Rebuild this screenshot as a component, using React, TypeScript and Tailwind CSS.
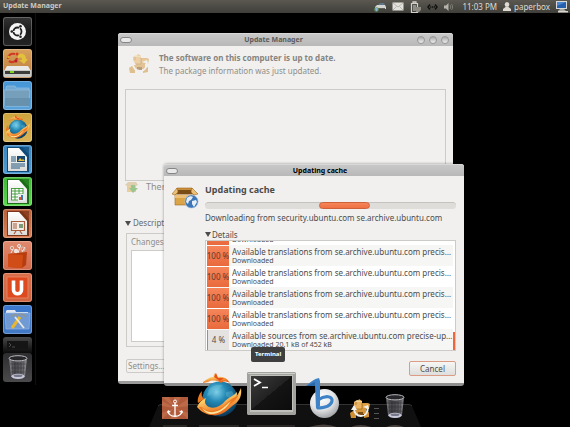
import type { ReactNode } from 'react';
import { clsx } from 'clsx';

const downloads = [
  { id: 1, progress: 100, title: 'Available translations from se.archive.ubuntu.com precise/main', status: 'Downloaded' },
  { id: 2, progress: 100, title: 'Available translations from se.archive.ubuntu.com precise/multiverse', status: 'Downloaded' },
  { id: 3, progress: 100, title: 'Available translations from se.archive.ubuntu.com precise/restricted', status: 'Downloaded' },
  { id: 4, progress: 100, title: 'Available translations from se.archive.ubuntu.com precise/universe', status: 'Downloaded' },
  { id: 5, progress: 100, title: 'Available translations from se.archive.ubuntu.com precise/extras', status: 'Downloaded' },
  { id: 6, progress: 4, title: 'Available sources from se.archive.ubuntu.com precise-updates/main', status: 'Downloaded 20.1 kB of 452 kB' },
];

/* Gradients shared by all icons */
function Gradients() {
  return (
    <svg className="absolute h-0 w-0" aria-hidden="true">
      <defs>
        <radialGradient id="globe" cx="0.4" cy="0.3" r="0.8">
          <stop offset="0" stopColor="#7fd0e8" />
          <stop offset="0.35" stopColor="#2489b5" />
          <stop offset="1" stopColor="#052a4a" />
        </radialGradient>
        <linearGradient id="flame" x1="0" y1="0" x2="0.4" y2="1">
          <stop offset="0" stopColor="#e2511a" />
          <stop offset="0.45" stopColor="#ffd069" />
          <stop offset="1" stopColor="#e8671b" />
        </linearGradient>
        <linearGradient id="paper" x1="0" y1="0" x2="0" y2="1">
          <stop offset="0" stopColor="#ffffff" />
          <stop offset="1" stopColor="#dcdcda" />
        </linearGradient>
        <linearGradient id="screen" x1="0" y1="0" x2="1" y2="1">
          <stop offset="0" stopColor="#3b3b3b" />
          <stop offset="0.5" stopColor="#222222" />
          <stop offset="0.5" stopColor="#141414" />
          <stop offset="1" stopColor="#0c0c0c" />
        </linearGradient>
        <linearGradient id="glass" x1="0" y1="0" x2="1" y2="0">
          <stop offset="0" stopColor="#a3a3a8" />
          <stop offset="0.3" stopColor="#515156" />
          <stop offset="0.7" stopColor="#6b6b70" />
          <stop offset="1" stopColor="#b0b0b5" />
        </linearGradient>
        <radialGradient id="ball" cx="0.4" cy="0.3" r="0.7">
          <stop offset="0" stopColor="#ffffff" />
          <stop offset="0.6" stopColor="#e3e4e6" />
          <stop offset="1" stopColor="#a5a7ab" />
        </radialGradient>
      </defs>
    </svg>
  );
}

function FirefoxIcon({ className }: { className: string }) {
  return (
    <svg viewBox="0 0 46 46" className={className} aria-hidden="true">
      <circle cx="24" cy="26" r="17.5" fill="url(#globe)" />
      <path d="M13 16c4-4 9-5 14-4l-4 4-5 1-3 5-4 1zM30 19l6-1 3 5-4 3-5-3z" fill="#7fd0e4" opacity="0.3" />
      <path d="M7 9c4-3 7-5 10-5l2-4 3 4c5-1 9 1 12 6-4-2-7-2-9 0-4-3-9-3-13-1l-5 1z" fill="url(#flame)" />
      <path d="M18 4l2-4 2 5 6 0-4 3z" fill="#e6531a" />
      <path d="M1 34c2-4 4-7 9-9-2 4-1 7 3 9 6 2 12-1 16-6 4-4 9-5 12-9 0 2 0 3-1 4 2-1 3-4 5-8 1 7-1 12-6 16-6 4-10 10-18 11-8 1-15-2-20-8z" fill="url(#flame)" />
      <path d="M3 34c3-1 5 3 10 4 9 1 14-4 19-9 4-4 8-5 11-8-3 7-8 9-12 13-6 6-14 8-20 6-4-1-6-3-8-6z" fill="#ef7a20" />
      <path d="M6 35c6 6 15 5 21 0l8-7c-5 8-13 14-21 13-4-1-6-3-8-6z" fill="#ffe7a0" />
      <path d="M2 30c-1-4 1-9 4-12-1 4 0 6 2 8z" fill="#e9791f" />
    </svg>
  );
}

function TrashIcon({ className }: { className: string }) {
  return (
    <svg viewBox="0 0 20 25" className={className} aria-hidden="true">
      <path d="M1 3l2 18c0 4 14 4 14 0l2-18z" fill="url(#glass)" opacity="0.75" />
      <path d="M4 6l1 15M7 7l0 16M10 7v16M13 7v16M16 6l-1 15M2 9h16M3 13h14M3 17h14" stroke="#2c2c30" strokeWidth="0.6" fill="none" opacity="0.7" />
      <ellipse cx="10" cy="3.3" rx="9" ry="2.6" fill="#27272a" stroke="#b9b9be" strokeWidth="1" />
      <ellipse cx="10" cy="21.3" rx="6.5" ry="2.6" fill="#c9c9dc" />
      <ellipse cx="10" cy="20.8" rx="4.5" ry="1.3" fill="#77778a" />
    </svg>
  );
}

function UpdateIcon({ className }: { className: string }) {
  return (
    <svg viewBox="0 0 20 20" className={className} aria-hidden="true">
      <path d="M4 3l4-1 1-2 3 2v2h6l2 1-1 5h-3v5H5V9H4z" fill="#d6983a" />
      <path d="M4 3h8v7H4z" fill="#eab260" />
      <path d="M4 3l3-2 5 1v1z" fill="#f3cf90" />
      <path d="M13 5h6v4h-6z" fill="#dfa34a" />
      <path d="M0 14l3-2 3 1v6H1zM14 14l5-1v5l-5 1z" fill="#cf8f32" />
      <path d="M4 10h8M12 4v6M6 3v3" stroke="#9c6720" strokeWidth="0.700" />
      <path d="M8 13h5v4H8z" fill="#7c4b14" />
      <path d="M17 7c2 5-1 10-6 10-4 0-7-3-7-7" fill="none" stroke="#f1f1ee" strokeWidth="1.800" />
      <path d="M1 11l3-5 3 5zM13 8l5-2 1 4z" fill="#f1f1ee" />
    </svg>
  );
}

function BoxIcon() {
  return (
    <svg viewBox="0 0 27 22" className="h-[22px] w-[27px] shrink-0" aria-hidden="true">
      <path d="M5 1h15l2 6H3z" fill="#c98f3a" stroke="#9e6922" strokeWidth="0.6" />
      <path d="M6 3h13l1 4H5z" fill="#7a4d16" />
      <path d="M5 1L0 7l3 1 3-3zM20 1l6 6-4 1-3-3z" fill="#edc077" stroke="#9e6922" strokeWidth="0.6" />
      <path d="M3 8h19v10H3z" fill="#dba447" stroke="#9e6922" strokeWidth="0.6" />
      <path d="M3 8h19v3H3z" fill="#edc077" />
      <circle cx="19.500" cy="14.500" r="6.600" fill="#3d76b8" stroke="#b7cbe0" strokeWidth="0.6" />
      <path d="M15 11c2-2 5-2 6-1l-2 3-2 1-1 3-2-2zM20 14l4-1 1 2-3 5-2-3z" fill="#e6eff8" />
    </svg>
  );
}

function AnchorIcon({ className }: { className: string }) {
  return (
    <svg viewBox="0 0 26 22" className={className} aria-hidden="true">
      <path d="M0 0h26v22H0z" fill="#b05a3c" />
      <path d="M13 11L0 0h7zM13 11L12 0h7zM13 11L26 2v7zM13 11l13 5v6zM13 11l2 11H8zM13 11L0 22v-6zM13 11L0 9V4z" fill="#bd6a48" />
      <path d="M13 6v13M10 8.500h6M6 14c1 7 13 7 14 0" fill="none" stroke="#ffffff" strokeWidth="1.300" />
      <circle cx="13" cy="4.500" r="1.500" fill="none" stroke="#ffffff" />
      <path d="M5 16l1-3 3 2zM21 16l-1-3-3 2z" fill="#ffffff" />
    </svg>
  );
}

function TerminalIcon() {
  return (
    <svg viewBox="0 0 49 43" className="h-[43px] w-[49px]" aria-hidden="true">
      <path d="M0 1l1-1h47l1 1v41l-1 1H1l-1-1z" fill="#a2a29f" />
      <path d="M1 1h47v1H1z" fill="#cfcfcc" />
      <path d="M3 3h43v37H3z" fill="#c0c0bd" />
      <path d="M4 4h41v34H4z" fill="url(#screen)" />
      <path d="M7 7l6 3.500-6 3.500" fill="none" stroke="#ffffff" strokeWidth="1.800" />
      <path d="M15 15.500h6" stroke="#ffffff" strokeWidth="1.500" />
    </svg>
  );
}

function BluefishIcon() {
  return (
    <svg viewBox="0 0 34 41" className="h-[41px] w-[34px]" aria-hidden="true">
      <circle cx="18.500" cy="25.500" r="14.500" fill="url(#ball)" />
      <path d="M0 8C4 4 8 1 13 0l1 3v25l-4 3-1-23z" fill="#3f83c6" />
      <path d="M0 8l9-4v4z" fill="#2d68a6" />
      <path d="M12 22c7-5 15-4 14 1-1 5-8 7-15 7" fill="none" stroke="#3f83c6" strokeWidth="3.200" />
    </svg>
  );
}

function DocumentIcon({ color, children }: { color: string; children: ReactNode }) {
  return (
    <svg viewBox="0 0 29 29" className="h-[29px] w-[29px]" aria-hidden="true">
      <path d="M4 2h15l7 8v17H4z" fill={color} />
      <path d="M5 3h11l8 9v14H5z" fill="url(#paper)" />
      <path d="M16 2h10v10z" fill={color} opacity="0.75" />
      {children}
    </svg>
  );
}

function Expander() {
  return (
    <svg viewBox="0 0 6 5" className="h-[5px] w-[6px]" aria-hidden="true">
      <path d="M0 0h6L3 5z" fill="#4c4c4c" />
    </svg>
  );
}

const launcherItems = [
  {
    name: 'Dash home',
    tile: 'bg-linear-to-b from-[#343434] via-[#1b1b1b] to-[#242424]',
    icon: (
      <svg viewBox="0 0 29 29" className="h-[29px] w-[29px]" aria-hidden="true">
        <circle cx="14.500" cy="14.500" r="8.500" fill="#f4f4f4" />
        <circle cx="14.500" cy="14.500" r="4" fill="none" stroke="#222222" strokeWidth="1.800" />
        <path d="M14.500 14.500h-6M14.500 14.500l3-5M14.500 14.500l3 5" stroke="#f4f4f4" strokeWidth="1" />
        <circle cx="8.800" cy="14.500" r="1.300" fill="#222222" />
        <circle cx="17.500" cy="9.300" r="1.300" fill="#222222" />
        <circle cx="17.500" cy="19.700" r="1.300" fill="#222222" />
      </svg>
    ),
  },
  {
    name: 'Install Ubuntu',
    tile: 'bg-linear-to-b from-[#d9a15c] to-[#b97a3c]',
    icon: (
      <svg viewBox="0 0 29 29" className="h-[29px] w-[29px]" aria-hidden="true">
        <path d="M4 17h21l3 5H1z" fill="#e9e9e7" />
        <path d="M1 21h27v7H1z" fill="#c9c9c6" />
        <path d="M2 22h25v3H2z" fill="#3c3c3a" />
        <path d="M7 22h4v2H7z" fill="#7ed321" />
        <path d="M15 6c5-3 8 0 8 4h2l-4 5-5-4h3c0-3-1-3-4-2z" fill="#e3c13a" />
        <path d="M5 10c0-4 3-6 7-5M6 12c3 2 7 1 8-3" fill="none" stroke="#cf3a25" strokeWidth="2.200" />
        <circle cx="5.500" cy="8" r="1.300" fill="#eaa52b" />
        <circle cx="14" cy="5" r="1.500" fill="#d93a1e" />
        <circle cx="13" cy="12" r="1.500" fill="#b71f2b" />
      </svg>
    ),
  },
  {
    name: 'Home Folder',
    tile: 'bg-linear-to-b from-[#4595d6] to-[#5aa2d8]',
    icon: (
      <svg viewBox="0 0 29 29" className="h-[29px] w-[29px]" aria-hidden="true">
        <path d="M3 6l1-1h8l1 2h13v18H3z" fill="#6fa9d4" stroke="#9ac8e8" strokeWidth="0.6" />
        <path d="M1 9h26l-1 16H2z" fill="#769fbb" stroke="#a3c8e0" strokeWidth="0.6" />
        <path d="M2 17h25v8H2z" fill="#6891ad" />
      </svg>
    ),
  },
  {
    name: 'Firefox Web Browser',
    tile: 'bg-linear-to-b from-[#cfa43c] to-[#d9b357]',
    icon: <FirefoxIcon className="h-[25px] w-[25px]" />,
  },
  {
    name: 'LibreOffice Writer',
    tile: 'bg-linear-to-b from-[#3d86bf] to-[#4f9bd2]',
    icon: (
      <DocumentIcon color="#0f4a78">
        <path d="M8 12h5M8 14h5M8 16h5M8 19h14M8 21h14M8 23h9" stroke="#22567f" strokeWidth="1" />
        <path d="M14 11h8v6h-8z" fill="#17476e" />
        <path d="M15 16l2-3 2 2 1-1 2 2z" fill="#e9b93c" />
      </DocumentIcon>
    ),
  },
  {
    name: 'LibreOffice Calc',
    tile: 'bg-linear-to-b from-[#41b837] to-[#5cd850]',
    icon: (
      <DocumentIcon color="#1c6d16">
        <path d="M8 11h12v12H8z" fill="#ffffff" />
        <path d="M8 11.500h12M8 14h12M8 17h12M8 20h12M8 23h8M8.500 11v12M12 11v12M16 11v12M20 11v7" stroke="#37962e" strokeWidth="0.900" />
        <path d="M15 17h7v7h-7z" fill="#e8edf0" />
        <path d="M16 20h2v3h-2z" fill="#d65a28" />
        <path d="M18 18h2v5h-2z" fill="#3c7ab5" />
      </DocumentIcon>
    ),
  },
  {
    name: 'LibreOffice Impress',
    tile: 'bg-linear-to-b from-[#b8603a] to-[#d98157]',
    icon: (
      <DocumentIcon color="#7b351a">
        <path d="M8.500 12.500h13v9h-13z" fill="#f4ece7" stroke="#a65c38" strokeWidth="1.200" />
        <path d="M10 15h4M10 17h4M10 19h4M13 22l-2 3M17 22l2 3" stroke="#a65c38" strokeWidth="1.200" />
        <path d="M16 15h4v4h-4z" fill="#7d9b78" />
      </DocumentIcon>
    ),
  },
  {
    name: 'Ubuntu Software Center',
    tile: 'bg-linear-to-b from-[#e08a6f] to-[#d2694a]',
    icon: (
      <svg viewBox="0 0 29 29" className="h-[29px] w-[29px]" aria-hidden="true">
        <path d="M5 13l19-2-1 13-4 3-14-1z" fill="#b83d0e" />
        <path d="M5 13l15 1-1 13-14-1z" fill="#d04d17" />
        <circle cx="9" cy="7" r="1.700" fill="none" stroke="#e2d6cc" />
        <circle cx="16" cy="5" r="1.500" fill="none" stroke="#e6eeee" />
        <circle cx="13" cy="10" r="2.200" fill="#eee4dc" />
        <circle cx="20" cy="8" r="2" fill="none" stroke="#d9c3b6" />
        <path d="M8 12l2-4M15 12l2-6M19 11l3-5" stroke="#f3e7e0" strokeWidth="1" />
      </svg>
    ),
  },
  {
    name: 'Ubuntu One',
    tile: 'bg-linear-to-b from-[#d9704c] to-[#cf6440]',
    icon: (
      <svg viewBox="0 0 29 29" className="h-[29px] w-[29px]" aria-hidden="true">
        <path d="M4 4h21v21H4z" fill="#dd4a20" stroke="#ec8c68" strokeWidth="0.800" />
        <path d="M10.500 7.500V17c0 5 8 5 8 0V7.500" fill="none" stroke="#ffffff" strokeWidth="3.600" />
      </svg>
    ),
  },
  {
    name: 'System Settings',
    tile: 'bg-linear-to-b from-[#3a78cf] to-[#4379c4]',
    icon: (
      <svg viewBox="0 0 29 29" className="h-[29px] w-[29px]" aria-hidden="true">
        <path d="M3 6l1-1h8l1 2h12v4H3z" fill="#dfe8f3" />
        <path d="M2 8h25l-1 16H3z" fill="#6f9ad4" stroke="#9dbce6" strokeWidth="0.600" />
        <path d="M17 12L9 23" stroke="#e8b62c" strokeWidth="3" />
        <path d="M12 12l9 11" stroke="#e6e6e4" strokeWidth="1.800" />
        <path d="M8 12c2-3 5-3 6-1M16 10c3-2 5 0 7 2" fill="none" stroke="#8e959c" strokeWidth="2" />
      </svg>
    ),
  },
];

/* Small glyphs of the top panel */
function PrinterIcon() {
  return (
    <svg viewBox="0 0 12 10" className="h-[10px] w-3" aria-hidden="true">
      <path d="M4 3l2-2h4l1 2" fill="#5d7487" />
      <path d="M1 5l2-2h8l1 2v2H1z" fill="#d3d3cf" />
      <path d="M3 6h8v1H3z" fill="#5f5e58" />
      <circle cx="2.500" cy="7.500" r="2.300" fill="#5f9a5a" />
      <path d="M1 7h3M2.500 6v3" stroke="#8fb4dd" />
    </svg>
  );
}

function MailIcon() {
  return (
    <svg viewBox="0 0 12 9" className="h-[9px] w-3" aria-hidden="true">
      <path d="M0.500 0.500h11v8H0.500z" fill="#e3e1db" />
      <path d="M1 1l5 4 5-4M1 8l3.500-3.500M11 8L7.500 4.500" fill="none" stroke="#a5a39a" strokeWidth="0.700" />
    </svg>
  );
}

function BatteryIcon() {
  return (
    <svg viewBox="0 0 11 12" className="h-3 w-[11px]" aria-hidden="true">
      <path d="M1.500 2.500h6v9h-6zM3 0.800h3v1.500H3z" fill="none" stroke="#d2d0c8" strokeWidth="1.200" />
      <path d="M3 5h3M3 7h3M3 9h3" stroke="#d2d0c8" />
      <path d="M6 6h5v3l-2 2H6z" fill="#8c8a82" />
    </svg>
  );
}

function NetworkIcon() {
  return (
    <svg viewBox="0 0 11 6" className="h-[6px] w-[11px]" aria-hidden="true">
      <path d="M3 0.500L1 3l2 2.500M8 0.500L10 3 8 5.500" fill="none" stroke="#11110f" strokeWidth="1.500" />
      <path d="M3.200 3h1.200M5 3h1.200M6.800 3H8" stroke="#11110f" strokeWidth="1.300" />
    </svg>
  );
}

function SoundIcon() {
  return (
    <svg viewBox="0 0 9 8" className="h-2 w-[9px]" aria-hidden="true">
      <path d="M0 2.500h2L4.500 0v8L2 5.500H0z" fill="#b5b3ab" />
      <path d="M6 2c1 1 1 3 0 4M7.500 1c1.500 2 1.500 4 0 6" fill="none" stroke="#8d8b83" strokeWidth="0.800" />
    </svg>
  );
}

function UserIcon() {
  return (
    <svg viewBox="0 0 8 9" className="h-[9px] w-2" aria-hidden="true">
      <ellipse cx="4" cy="2.500" rx="2.300" ry="2.500" fill="#dfdbd2" />
      <path d="M0 9V7l2.500-2h3L8 7v2z" fill="#dfdbd2" />
    </svg>
  );
}

function MonitorIcon() {
  return (
    <svg viewBox="0 0 12 12" className="h-3 w-3" aria-hidden="true">
      <path d="M0 0h11v8H0z" fill="#d6d8da" />
      <path d="M1 1h9v6H1z" fill="#245fae" />
      <path d="M1 1h9L1 5z" fill="#4c86cf" />
      <path d="M4 8h4l2 2H2z" fill="#aaa9a3" />
      <path d="M2 10h10v1.500H2z" fill="#d6d4cd" />
    </svg>
  );
}

function Panel() {
  return (
    <header className="flex h-[13px] shrink-0 items-center justify-between bg-linear-to-b from-[#5a5850] to-[#403f3a] pr-[2px] pl-[3px] text-[#dfdbd2]">
      <span className="text-[7px] font-bold text-[#cdc9c0]">Update Manager</span>
      <div className="flex items-center gap-[6px]">
        <PrinterIcon />
        <MailIcon />
        <BatteryIcon />
        <NetworkIcon />
        <SoundIcon />
        <time className="ml-[3px] text-[8px]">11:03 PM</time>
        <button type="button" className="flex items-center gap-[3px] text-[8px]">
          <UserIcon />
          paperbox
        </button>
        <MonitorIcon />
      </div>
    </header>
  );
}

function Launcher() {
  return (
    <nav className="w-9 shrink-0 self-start border-r border-[#101012] pt-1 pb-[3px] pl-[3px]">
      <div className="flex flex-col gap-[3px]">
        {launcherItems.map((item) => (
          <button
            key={item.name}
            type="button"
            aria-label={item.name}
            className={clsx('flex h-[29px] w-[29px] items-center justify-center rounded-[3px] inset-ring inset-ring-white/25', item.tile)}
          >
            {item.icon}
          </button>
        ))}
        <div>
          <button type="button" aria-label="Terminal" className="block h-4 w-[29px] rounded-t-[3px] bg-linear-to-b from-[#4a4a4a] to-[#0c0c0c] p-1">
            <svg viewBox="0 0 21 8" className="h-2 w-[21px]" aria-hidden="true">
              <path d="M0 0h21v8H0z" fill="#151515" />
              <path d="M2 2l2 2-2 2M5 6h3" fill="none" stroke="#5c5c5c" strokeWidth="0.800" />
            </svg>
          </button>
          <button type="button" aria-label="Trash" className="flex h-[29px] w-[29px] items-center justify-center rounded-[3px] bg-linear-to-b from-[#2d2d2f] to-[#4a4a4c]">
            <TrashIcon className="h-[25px] w-5" />
          </button>
        </div>
      </div>
    </nav>
  );
}

function TitleBar({ title, active, controls }: { title: string; active?: boolean; controls?: boolean }) {
  return (
    <div
      className={clsx(
        'grid items-center rounded-t-[3px] border-t border-[#d8d8d8] bg-linear-to-b from-[#c8c8c8] to-[#b8b8b8]',
        active ? 'h-3 grid-cols-[40px_1fr_28px]' : 'h-[13px] grid-cols-[24px_1fr_48px]'
      )}
    >
      <button type="button" aria-label="Close" className="ml-[2px] h-[6px] w-3 rounded-full border border-[#858585] bg-[#e9e9e9]" />
      <h1 className={clsx('text-center text-[7px] leading-[10px] font-bold', active ? 'text-black' : 'text-[#5c5c5c]')}>{title}</h1>
      {controls && (
        <div className="flex justify-end gap-1 pr-1">
          {['Minimize', 'Maximize', 'Restore'].map((name) => (
            <button key={name} type="button" aria-label={name} className="h-2 w-2 rounded-full border border-[#979797] bg-linear-to-b from-[#a9a9a9] to-[#efefef]" />
          ))}
        </div>
      )}
    </div>
  );
}

function UpdateManager() {
  return (
    <section className="absolute top-5 right-[117px] left-[118px] rounded-[3px] border-b-[3px] border-[#9a9a9a] bg-[#f1f0ee] text-[#8f8e8b]">
      <TitleBar title="Update Manager" controls />
      <div className="flex flex-col px-[7px] pt-1 pb-2">
        <div className="flex items-center gap-[10px] pt-px pl-1">
          <UpdateIcon className="h-5 w-5 opacity-50" />
          <div className="text-[8px] leading-[13px]">
            <h2 className="font-bold text-[#858481]">The software on this computer is up to date.</h2>
            <p>The package information was just updated.</p>
          </div>
        </div>
        <div className="mt-3 h-[92px] border border-[#cccbc8]" />
        <div className="flex h-3 items-center gap-2 text-[9px]">
          <svg viewBox="0 0 13 12" className="h-3 w-[13px]" aria-hidden="true">
            <path d="M0 4l3-3h8l2 3-2 1v6H2V5z" fill="#dfcfae" />
            <path d="M2 5h9v6H2z" fill="#e6cf9f" />
            <path d="M6 4h4v3h3l-5 5-4-5h2z" fill="#9cc48f" />
          </svg>
          There are no updates to install.
        </div>
        <button type="button" className="mt-6 flex h-3 items-center gap-[2px] text-[8px] text-[#6b6a67]">
          <Expander />
          Description of update
        </button>
        <div className="mt-1 ml-px border border-[#cccbc8] p-1 pt-0">
          <button type="button" className="block h-4 text-[8px] leading-3">Changes</button>
          <textarea readOnly aria-label="Changes" className="block h-[92px] w-full resize-none border border-[#cccbc8] bg-white" />
        </div>
        <button type="button" className="mt-3 ml-px h-[14px] w-[54px] self-start rounded-[2px] border border-[#cccbc8] pl-px text-left text-[8px] leading-3">
          Settings...
        </button>
      </div>
    </section>
  );
}

function UpdatingCache() {
  return (
    <section role="dialog" aria-label="Updating cache" className="absolute top-[151px] right-[106px] left-[164px] rounded-[3px] border-b-[3px] border-[#8f8f8f] bg-[#f1f0ee] text-[#4c4c4c] shadow-[0_0_3px_#00000066]">
      <TitleBar title="Updating cache" active />
      <div className="flex gap-[6px] pt-[7px] pr-2 pb-[7px] pl-2">
        <div className="pt-1">
          <BoxIcon />
        </div>
        <div className="min-w-0 flex-1">
          <h2 className="text-[9px] leading-[14px] font-bold">Updating cache</h2>
          <div role="progressbar" aria-label="Updating cache" className="mt-[5px] flex h-[7px] justify-center rounded-full border-t border-[#c4c3c0] bg-[#deddda] pl-7">
            <div className="-mt-px h-[7px] w-[51px] rounded-full border border-[#d0603a] bg-linear-to-b from-[#f58558] to-[#ee7043]" />
          </div>
          <p className="mt-[3px] text-[8px] leading-3">Downloading from security.ubuntu.com se.archive.ubuntu.com</p>
          <button type="button" className="mt-[5px] flex h-[11px] items-center gap-px text-[8px]">
            <Expander />
            Details
          </button>
          <div className="flex h-[111px] border border-[#cccbc8] bg-white">
            <ul className="flex min-w-0 flex-1 flex-col justify-end overflow-hidden pl-px">
              {downloads.map((item) => (
                <li key={item.id} className="flex h-[21px] shrink-0 gap-[3px] pt-px even:bg-[#f6f6f5]">
                  <span
                    className={clsx(
                      'flex w-[22px] shrink-0 items-center justify-center text-[8px] whitespace-nowrap',
                      item.progress === 100 ? 'bg-linear-to-b from-[#f58559] to-[#e96a3c] text-[#5e3a2c]' : 'border-l border-[#ee7043] bg-[#e4e3e1]'
                    )}
                  >
                    {item.progress} %
                  </span>
                  <div className="min-w-0 flex-1">
                    <div className="truncate text-[8px] leading-[11px]">{item.title}</div>
                    <div className="text-[7px] leading-[8px]">{item.status}</div>
                  </div>
                </li>
              ))}
            </ul>
            <div className="h-[18px] w-[2px] self-end bg-[#f0663a]" />
          </div>
          <div className="mt-[10px] flex justify-end">
            <button type="button" className="h-[15px] w-[47px] rounded-[2px] border border-[#dc9b84] bg-linear-to-b from-[#f6f6f5] to-[#dededc] text-[8px] leading-3">
              Cancel
            </button>
          </div>
        </div>
      </div>
    </section>
  );
}

function Dock() {
  return (
    <footer className="absolute bottom-0 left-1/2 w-[272px] -translate-x-1/2">
      <svg viewBox="0 0 272 23" className="absolute bottom-0 h-[23px] w-full" aria-hidden="true">
        <path d="M0 23L9 2q1-2 4-2h246q3 0 4 2l9 21z" fill="#101010" />
        <path d="M9 2q1-1.500 4-1.500h246q3 0 4 1.500" fill="none" stroke="#333333" />
        <path d="M14 21h24v2H14zM50 21h40v2H50zM98 21h48v2H98z" fill="#292625" />
        <path d="M160 23q15-5 28 0zM202 23q9-4 20 0zM237 23q9-4 18 0z" fill="#49423e" />
      </svg>
      <div className="relative flex items-end pb-2 pl-[13px]">
        <button type="button" aria-label="Docky" className="mr-2">
          <AnchorIcon className="h-[22px] w-[26px]" />
        </button>
        <button type="button" aria-label="Firefox" className="mr-[5px]">
          <FirefoxIcon className="h-[46px] w-[46px]" />
        </button>
        <button type="button" className="relative mr-[10px] pb-1">
          <span className="absolute bottom-[57px] left-1 rounded-[2px] bg-[#353535]/95 px-1 text-[6px] leading-[15px] font-bold text-white">Terminal</span>
          <TerminalIcon />
        </button>
        <button type="button" aria-label="Bluefish" className="mr-[10px]">
          <BluefishIcon />
        </button>
        <button type="button" aria-label="Update Manager" className="mr-1">
          <UpdateIcon className="h-5 w-5" />
        </button>
        <div className="mr-[6px] flex w-[5px] flex-col gap-1">
          <span className="h-px bg-[#555555]" />
          <span className="h-px bg-[#555555]" />
          <span className="h-px bg-[#555555]" />
        </div>
        <button type="button" aria-label="Trash">
          <TrashIcon className="h-[25px] w-5" />
        </button>
      </div>
    </footer>
  );
}

export default function App() {
  return (
    <div className="relative flex h-screen flex-col overflow-hidden bg-black font-['Noto_Sans','Open_Sans',sans-serif]">
      <Gradients />
      <Panel />
      <main className="relative flex flex-1">
        <Launcher />
        <UpdateManager />
        <UpdatingCache />
      </main>
      <Dock />
    </div>
  );
}
